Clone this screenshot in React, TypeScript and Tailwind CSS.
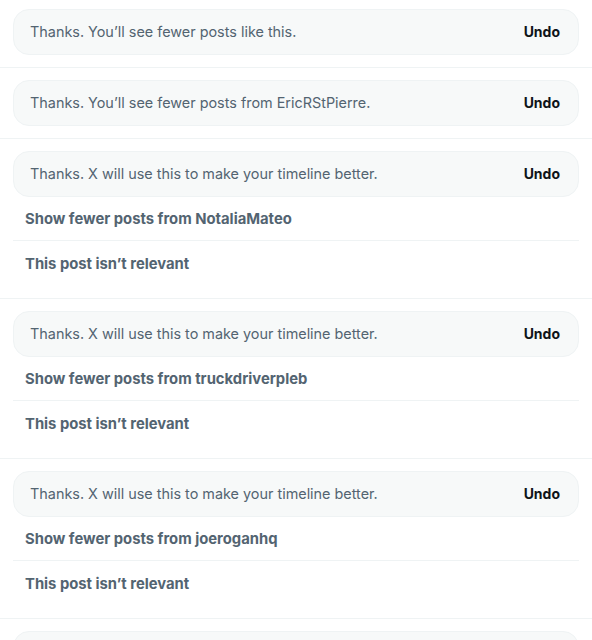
const feedback = [
  { message: "Thanks. You’ll see fewer posts like this.", options: [] as string[] },
  { message: "Thanks. You’ll see fewer posts from EricRStPierre.", options: [] as string[] },
  {
    message: "Thanks. X will use this to make your timeline better.",
    options: ["Show fewer posts from NotaliaMateo", "This post isn’t relevant"],
  },
  {
    message: "Thanks. X will use this to make your timeline better.",
    options: ["Show fewer posts from truckdriverpleb", "This post isn’t relevant"],
  },
  {
    message: "Thanks. X will use this to make your timeline better.",
    options: ["Show fewer posts from joeroganhq", "This post isn’t relevant"],
  },
  { message: "Thanks. X will use this to make your timeline better.", options: [] as string[] },
];

function Notice({ message, options }: { message: string; options: string[] }) {
  return (
    <div
      className={
        options.length > 0
          ? "border-b border-[#eff3f4] px-[13px] pt-3 pb-[13px]"
          : "border-b border-[#eff3f4] px-[13px] pt-3 pb-3"
      }
    >
      <div className="flex h-[46px] items-center justify-between rounded-2xl border border-[#eff3f4] bg-[#f7f9f9] pl-4 pr-[18px]">
        <span className="text-[14.4px] text-[#536471]">{message}</span>
        <button className="-mt-px text-[14px] font-bold text-[#0f1419]">Undo</button>
      </div>
      {options.length > 0 && (
        <div>
          {options.map((opt, i) => (
            <div
              key={opt}
              className={
                i < options.length - 1
                  ? "flex h-[44px] items-center border-b border-[#eff3f4] px-3 pt-[2px] text-[14.8px] font-bold text-[#536471]"
                  : "flex h-[44px] items-center px-3 pt-[2px] text-[14.8px] font-bold text-[#536471]"
              }
            >
              {opt}
            </div>
          ))}
        </div>
      )}
    </div>
  );
}

export default function App() {
  return (
    <div className="w-[592px] h-[640px] overflow-hidden bg-white font-['Inter',sans-serif]">
      <div className="-mt-[3px]">
        {feedback.map((f, i) => (
          <Notice key={i} message={f.message} options={f.options} />
        ))}
      </div>
    </div>
  );
}
